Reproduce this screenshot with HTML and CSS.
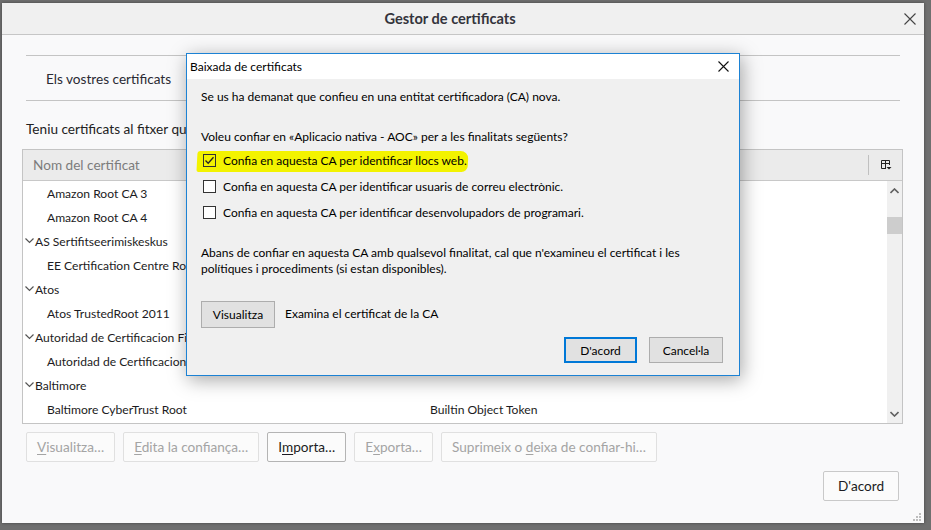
FILE: index.html
```html
<!DOCTYPE html>
<html lang="ca">
<head>
<meta charset="utf-8">
<title>Gestor de certificats</title>
<link rel="stylesheet" href="styles.css">
</head>
<body>
<div class="desk">
  <div class="win">
    <div class="titlebar">
      <span class="title">Gestor de certificats</span>
      <svg class="win-close" width="12" height="12" viewBox="0 0 12 12"><path d="M0.5 0.5 L11.5 11.5 M11.5 0.5 L0.5 11.5" stroke="#444" stroke-width="1.1" fill="none"/></svg>
    </div>
    <div class="content">
      <div class="tabs"><span class="tab">Els vostres certificats</span></div>
      <p class="intro">Teniu certificats al fitxer que identifiquen aquestes entitats certificadores:</p>
      <div class="tree">
        <div class="tree-head">
          <span class="col-name">Nom del certificat</span>
          <span class="head-sep"></span>
          <svg class="picker" width="12" height="12" viewBox="0 0 12 12"><path d="M1.5 1.5 H9.5 V6 M1.5 1.5 V9.5 H6 M1.5 4.5 H9.5 M5.5 1.5 V9.5" stroke="#222" stroke-width="1" fill="none"/><path d="M6.5 8 H11.5 L9 10.5 Z" fill="#222"/></svg>
        </div>
        <div class="tree-body">
          <div class="rows">
            <div class="row child">Amazon Root CA 3</div>
            <div class="row child">Amazon Root CA 4</div>
            <div class="row parent"><svg class="twisty" width="9" height="6" viewBox="0 0 9 6"><path d="M0.5 0.5 L4.5 4.5 L8.5 0.5" stroke="#555" stroke-width="1.2" fill="none"/></svg>AS Sertifitseerimiskeskus</div>
            <div class="row child">EE Certification Centre Root CA</div>
            <div class="row parent"><svg class="twisty" width="9" height="6" viewBox="0 0 9 6"><path d="M0.5 0.5 L4.5 4.5 L8.5 0.5" stroke="#555" stroke-width="1.2" fill="none"/></svg>Atos</div>
            <div class="row child">Atos TrustedRoot 2011</div>
            <div class="row parent"><svg class="twisty" width="9" height="6" viewBox="0 0 9 6"><path d="M0.5 0.5 L4.5 4.5 L8.5 0.5" stroke="#555" stroke-width="1.2" fill="none"/></svg>Autoridad de Certificacion Firmaprofesional CIF A62634068</div>
            <div class="row child">Autoridad de Certificacion Firmaprofesional CIF A62634068</div>
            <div class="row parent"><svg class="twisty" width="9" height="6" viewBox="0 0 9 6"><path d="M0.5 0.5 L4.5 4.5 L8.5 0.5" stroke="#555" stroke-width="1.2" fill="none"/></svg>Baltimore</div>
            <div class="row child"><span class="cell-name">Baltimore CyberTrust Root</span><span class="cell-dev">Builtin Object Token</span></div>
          </div>
          <div class="scrollbar">
            <svg class="sb-arrow" width="9" height="6" viewBox="0 0 9 6"><path d="M0.5 5 L4.5 1 L8.5 5" stroke="#606060" stroke-width="1.6" fill="none"/></svg>
            <div class="sb-thumb"></div>
            <div class="sb-track"></div>
            <svg class="sb-arrow" width="9" height="6" viewBox="0 0 9 6"><path d="M0.5 1 L4.5 5 L8.5 1" stroke="#606060" stroke-width="1.6" fill="none"/></svg>
          </div>
        </div>
      </div>
      <div class="actions">
        <button class="btn disabled"><u>V</u>isualitza…</button>
        <button class="btn disabled"><u>E</u>dita la confiança…</button>
        <button class="btn">I<u>m</u>porta…</button>
        <button class="btn disabled">E<u>x</u>porta…</button>
        <button class="btn disabled">Suprimeix o <u>d</u>eixa de confiar-hi…</button>
      </div>
      <div class="footer">
        <button class="btn ok">D'acord</button>
      </div>
    </div>
    <svg class="grip" width="10" height="10" viewBox="0 0 10 10"><g fill="#bdbdbd"><rect x="7" y="1" width="2" height="2"/><rect x="4" y="4" width="2" height="2"/><rect x="7" y="4" width="2" height="2"/><rect x="1" y="7" width="2" height="2"/><rect x="4" y="7" width="2" height="2"/><rect x="7" y="7" width="2" height="2"/></g></svg>
  </div>

  <div class="dialog">
    <div class="dlg-title">
      <span>Baixada de certificats</span>
      <svg class="dlg-close" width="11" height="11" viewBox="0 0 11 11"><path d="M0.5 0.5 L10.5 10.5 M10.5 0.5 L0.5 10.5" stroke="#111" stroke-width="1.1" fill="none"/></svg>
    </div>
    <div class="dlg-body">
      <p class="line first">Se us ha demanat que confieu en una entitat certificadora (CA) nova.</p>
      <p class="line q">Voleu confiar en «Aplicacio nativa - AOC» per a les finalitats següents?</p>
      <div class="checks">
        <span class="marker"></span>
        <label class="check"><span class="box checked"><svg width="11" height="11" viewBox="0 0 11 11"><path d="M1.5 5.5 L4.2 8.3 L9.5 2.2" stroke="#222" stroke-width="1.3" fill="none"/></svg></span>Confia en aquesta CA per identificar llocs web.</label>
        <label class="check"><span class="box"></span>Confia en aquesta CA per identificar usuaris de correu electrònic.</label>
        <label class="check"><span class="box"></span>Confia en aquesta CA per identificar desenvolupadors de programari.</label>
      </div>
      <p class="para">Abans de confiar en aquesta CA amb qualsevol finalitat, cal que n'examineu el certificat i les polítiques i procediments (si estan disponibles).</p>
      <div class="view-row">
        <button class="dbtn view">Visualitza</button>
        <span>Examina el certificat de la CA</span>
      </div>
      <div class="dlg-buttons">
        <button class="dbtn default">D'acord</button>
        <button class="dbtn">Cancel·la</button>
      </div>
    </div>
  </div>
</div>
</body>
</html>
```

FILE: styles.css
```css
* { box-sizing: border-box; }
html, body { margin: 0; padding: 0; }
body {
  width: 931px;
  height: 530px;
  overflow: hidden;
  font-family: Lato, "Liberation Sans", sans-serif;
  font-size: 12px;
  color: #1c1b22;
}
.desk {
  position: relative;
  width: 931px;
  height: 530px;
  background: #6f6f6f;
  padding: 3px 7px 7px 2px;
}
.win {
  position: relative;
  width: 922px;
  height: 520px;
  background: #f9f9fa;
  display: flex;
  flex-direction: column;
  box-shadow: 0 0 3px rgba(0,0,0,0.4);
}
.titlebar {
  height: 32px;
  flex: none;
  background: #f0f0f0;
  border-bottom: 1px solid #c6c6c6;
  display: flex;
  align-items: center;
  justify-content: center;
  position: relative;
}
.title {
  font-weight: bold;
  font-size: 14.6px;
  color: #34343c;
  margin-left: -26px;
}
.win-close {
  position: absolute;
  right: 8px;
  top: 10px;
}
.content {
  flex: 1;
  padding: 0 21px 0 20px;
  display: flex;
  flex-direction: column;
}
.tabs {
  margin: 20px 3px 0 4px;
  height: 46px;
  border-top: 1px solid #c4c4c4;
  border-bottom: 1px solid #c4c4c4;
  display: flex;
  align-items: center;
  padding-left: 20px;
  padding-top: 2px;
}
.tab { color: #2a2a33; font-size: 13.6px; }
.intro {
  margin: 20px 0 12px 4px;
  line-height: 16px;
  font-size: 13.6px;
  white-space: nowrap;
  color: #222;
}
.tree {
  border: 1px solid #c4c4c4;
  background: #fff;
}
.tree-head {
  height: 31px;
  background: #ebebeb;
  border-bottom: 1px solid #c8c8c8;
  display: flex;
  align-items: center;
  font-size: 13.6px;
  color: #7c7c7c;
}
.col-name { padding-left: 10px; flex: 1; }
.head-sep {
  width: 1px;
  height: 20px;
  background: #c0c0c0;
  margin-right: 11px;
}
.picker { margin-right: 10px; }
.tree-body {
  height: 242px;
  display: flex;
}
.rows { flex: 1; }
.row {
  height: 24px;
  display: flex;
  align-items: center;
  white-space: nowrap;
  font-size: 12.1px;
  color: #1c1b22;
}
.row.child { padding-left: 24px; }
.row.parent { padding-left: 2px; }
.twisty { margin-right: 1px; }
.cell-name { width: 383px; }
.scrollbar {
  width: 15px;
  background: #f0f0f0;
  display: flex;
  flex-direction: column;
  align-items: center;
  padding-top: 7px;
  padding-bottom: 6px;
}
.sb-thumb {
  width: 15px;
  height: 17px;
  background: #cdcdcd;
  margin-top: 23px;
}
.sb-track { flex: 1; }
.actions {
  display: flex;
  gap: 8px;
  margin: 8px 0 0 4px;
}
.btn {
  font-family: Lato, "Liberation Sans", sans-serif;
  font-size: 13.6px;
  height: 30px;
  padding: 0 10px;
  background: #fbfbfb;
  border: 1px solid #b4b4b4;
  border-radius: 2px;
  color: #1c1b22;
}
.btn.disabled {
  color: #a4a4a4;
  border-color: #e0e0e0;
}
.btn u { text-decoration: underline; text-underline-offset: 2px; }
.footer {
  display: flex;
  justify-content: flex-end;
  margin: 9px 4px 0 0;
}
.btn.ok {
  width: 76px;
  font-size: 13.6px;
  border-color: #c9c9c9;
}
.grip {
  position: absolute;
  right: 2px;
  bottom: 1px;
}

/* Dialog */
.dialog {
  position: absolute;
  left: 186px;
  top: 53px;
  width: 554px;
  height: 323px;
  border: 1px solid #1c82d4;
  background: #f0f0f0;
  box-shadow: 2px 4px 18px rgba(0,0,0,0.35);
  display: flex;
  flex-direction: column;
  color: #000;
}
.dlg-title {
  height: 25px;
  background: #fff;
  display: flex;
  align-items: center;
  justify-content: space-between;
  padding: 0 10px 0 3px;
  font-size: 12px;
}
.dlg-body {
  padding: 10px 16px 0 14px;
  position: relative;
}
.line { margin: 0; line-height: 16px; white-space: nowrap; }
.line.q { margin-top: 24px; }
.checks {
  position: relative;
  margin-top: 2px;
}
.marker {
  position: absolute;
  left: -4px;
  top: 4px;
  width: 271px;
  height: 21px;
  background: #f3f300;
  border-radius: 3px 8px 6px 2px;
  transform: skewX(-3deg);
}
.check {
  position: relative;
  display: flex;
  align-items: center;
  height: 26px;
  white-space: nowrap;
}
.box {
  width: 13px;
  height: 13px;
  border: 1px solid #333;
  background: #fff;
  margin: 0 7px 0 2px;
  display: flex;
  align-items: center;
  justify-content: center;
}
.box.checked { background: transparent; }
.para {
  margin: 20px 0 0 0;
  line-height: 16px;
  width: 500px;
}
.view-row {
  display: flex;
  align-items: center;
  gap: 10px;
  margin-top: 24px;
}
.view-row span { margin-top: -3px; }
.dbtn {
  font-family: Lato, "Liberation Sans", sans-serif;
  font-size: 12px;
  height: 26px;
  width: 74px;
  background: #e1e1e1;
  border: 1px solid #adadad;
  color: #000;
  padding: 0;
}
.dbtn.view { height: 27px; }
.dbtn.default {
  border: 2px solid #0078d7;
  width: 73px;
}
.dlg-buttons {
  display: flex;
  justify-content: flex-end;
  gap: 12px;
  margin-top: 9px;
}
```
